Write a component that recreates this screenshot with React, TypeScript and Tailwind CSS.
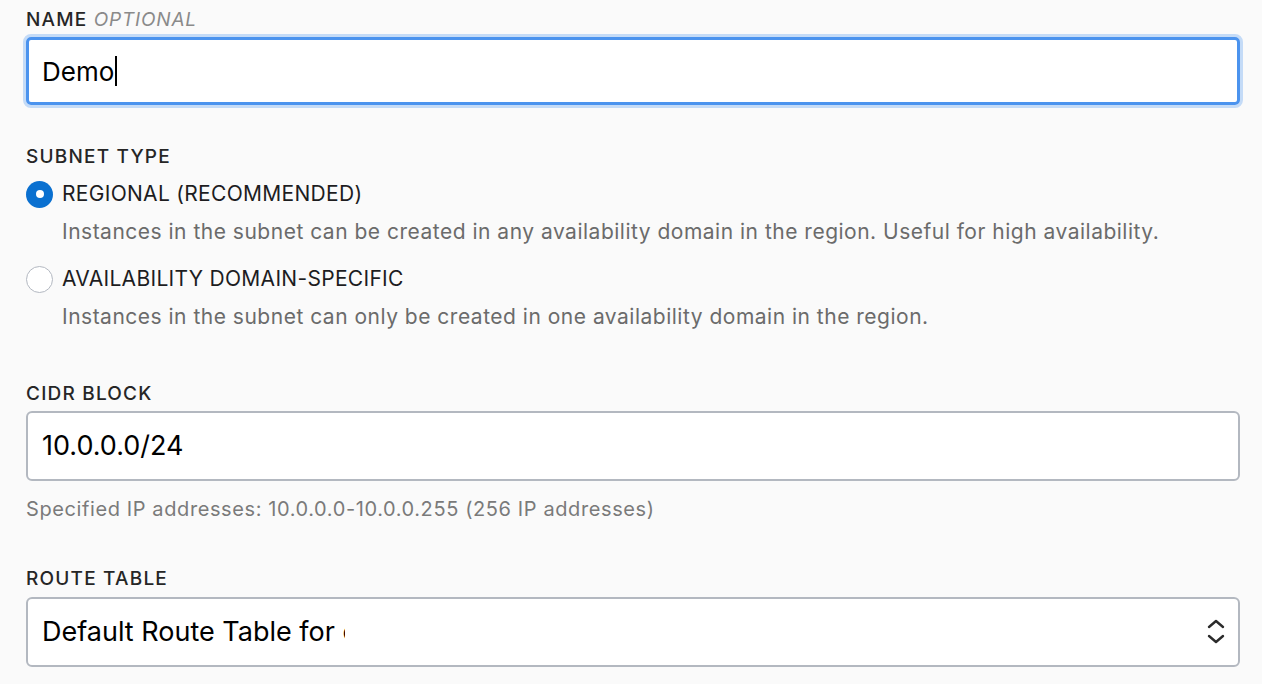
import { useState } from "react"

/**
 * Create Subnet form fragment
 */
function FieldLabel({ children }: { children: React.ReactNode }) {
  return (
    <div className="text-[19px] leading-[24px] font-medium tracking-[1.2px] text-[#262626]">
      {children}
    </div>
  )
}

function Radio({ checked }: { checked: boolean }) {
  return checked ? (
    <span className="flex h-[27px] w-[27px] shrink-0 items-center justify-center rounded-full bg-[#0a70d0]">
      <span className="h-[8px] w-[8px] rounded-full bg-white" />
    </span>
  ) : (
    <span className="h-[27px] w-[27px] shrink-0 rounded-full border-[1.5px] border-[#b3b8c1] bg-white" />
  )
}

export default function App() {
  const [type, setType] = useState("regional")

  const options = [
    {
      id: "regional",
      label: "REGIONAL (RECOMMENDED)",
      help: "Instances in the subnet can be created in any availability domain in the region. Useful for high availability.",
    },
    {
      id: "ad",
      label: "AVAILABILITY DOMAIN-SPECIFIC",
      help: "Instances in the subnet can only be created in one availability domain in the region.",
    },
  ]

  return (
    <div className="min-h-[684px] bg-[#fafafa] pl-[26px] pr-[22px] pt-[8px] font-['Inter',sans-serif]">
      {/* Name */}
      <FieldLabel>
        NAME <span className="font-normal italic tracking-[0.8px] text-[#8a8a8a]">OPTIONAL</span>
      </FieldLabel>
      <div className="-mx-[3px] mt-[2px] rounded-[8px] border-[3px] border-[#c4dbf7]">
        <div className="flex h-[68px] items-center rounded-[5px] border-[3px] border-[#4b93ee] bg-white px-[13px] text-[26px] text-black">
          Demo
          <span className="ml-[1px] h-[30px] w-[2px] bg-black" />
        </div>
      </div>

      {/* Subnet type */}
      <div className="mt-[37px]">
        <FieldLabel>SUBNET TYPE</FieldLabel>
        <div className="mt-[11px] flex flex-col gap-[20px]">
          {options.map((o) => (
            <div key={o.id} className="cursor-pointer" onClick={() => setType(o.id)}>
              <div className="flex h-[28px] items-center gap-[9px]">
                <Radio checked={type === o.id} />
                <span className="text-[21px] leading-[28px] tracking-[0.3px] text-[#1d1d1f]">{o.label}</span>
              </div>
              <div className="mt-[11px] pl-[36px] text-[21px] leading-[26px] tracking-[0.5px] text-[#6b6b6b]">{o.help}</div>
            </div>
          ))}
        </div>
      </div>

      {/* CIDR block */}
      <div className="mt-[52px]">
        <FieldLabel>CIDR BLOCK</FieldLabel>
        <div className="mt-[5px] flex h-[70px] items-center rounded-[6px] border-[2px] border-[#b3b8c0] bg-white px-[14px] text-[27px] text-black">
          10.0.0.0/24
        </div>
        <div className="mt-[16px] text-[20px] leading-[24px] tracking-[0.6px] text-[#7a7a7a]">
          Specified IP addresses: 10.0.0.0-10.0.0.255 (256 IP addresses)
        </div>
      </div>

      {/* Route table */}
      <div className="mt-[46px]">
        <FieldLabel>ROUTE TABLE</FieldLabel>
        <div className="mt-[6px] flex h-[70px] items-center justify-between rounded-[6px] border-[2px] border-[#b3b8c0] bg-white pl-[14px] pr-[13px] text-[27px] text-black">
          <span className="w-[303px] overflow-hidden whitespace-nowrap">Default Route Table for c</span>
          <svg width="18" height="30" viewBox="0 0 18 30" fill="none" stroke="#2b2b2b" strokeWidth="2.4" strokeLinecap="round" strokeLinejoin="round">
            <path d="M2 10 L9 4 L16 10" />
            <path d="M2 19 L9 25 L16 19" />
          </svg>
        </div>
      </div>
    </div>
  )
}
